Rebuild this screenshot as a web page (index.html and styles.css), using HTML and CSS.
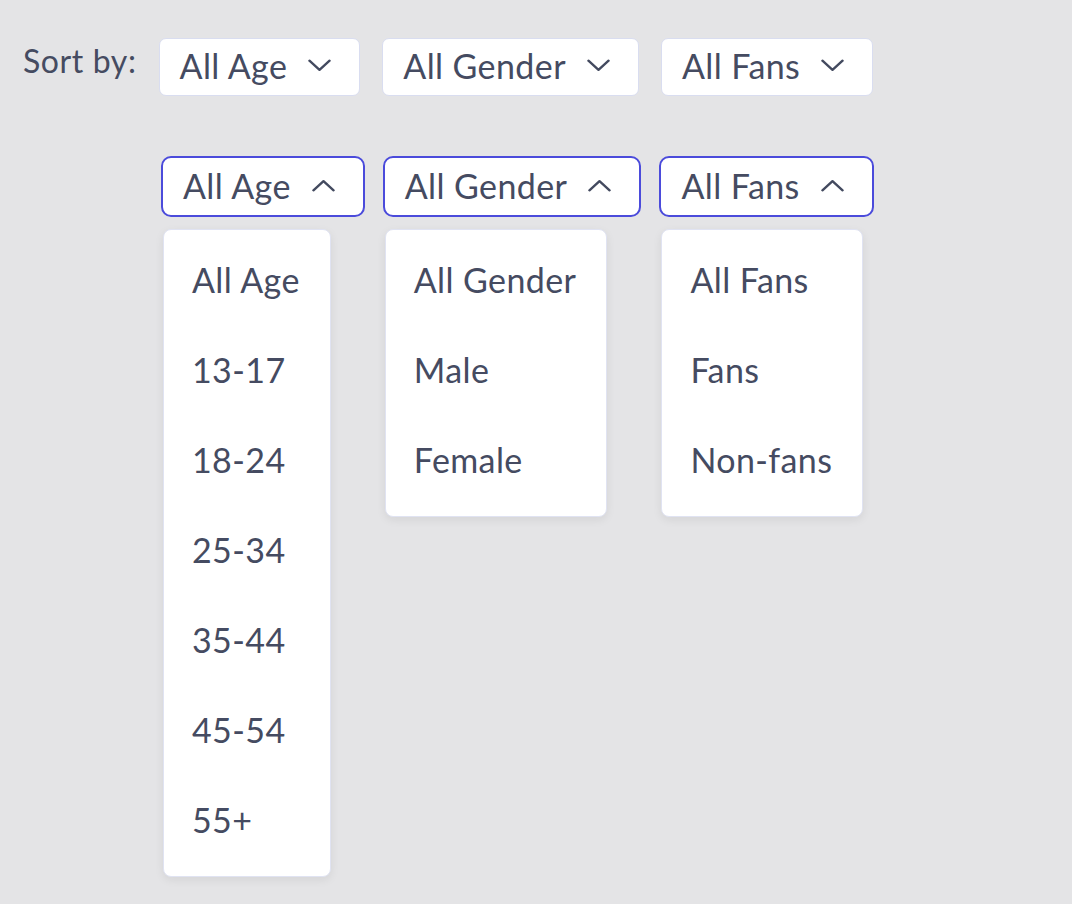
FILE: index.html
```html
<!DOCTYPE html>
<html>
<head>
<meta charset="utf-8">
<link rel="stylesheet" href="styles.css">
</head>
<body>
<div class="page">
  <div class="sort-row">
    <span class="sort-label">Sort by:</span>
    <button class="select">All Age<svg class="chev" viewBox="0 0 24 13"><path d="M1.5 1.5 L12 11 L22.5 1.5"/></svg></button>
    <button class="select">All Gender<svg class="chev" viewBox="0 0 24 13"><path d="M1.5 1.5 L12 11 L22.5 1.5"/></svg></button>
    <button class="select">All Fans<svg class="chev" viewBox="0 0 24 13"><path d="M1.5 1.5 L12 11 L22.5 1.5"/></svg></button>
  </div>

  <div class="open-row">
    <div class="dd">
      <button class="select open">All Age<svg class="chev" viewBox="0 0 24 13"><path d="M1.5 11.5 L12 2 L22.5 11.5"/></svg></button>
      <ul class="menu">
        <li>All Age</li>
        <li>13-17</li>
        <li>18-24</li>
        <li>25-34</li>
        <li>35-44</li>
        <li>45-54</li>
        <li>55+</li>
      </ul>
    </div>
    <div class="dd">
      <button class="select open">All Gender<svg class="chev" viewBox="0 0 24 13"><path d="M1.5 11.5 L12 2 L22.5 11.5"/></svg></button>
      <ul class="menu">
        <li>All Gender</li>
        <li>Male</li>
        <li>Female</li>
      </ul>
    </div>
    <div class="dd">
      <button class="select open">All Fans<svg class="chev" viewBox="0 0 24 13"><path d="M1.5 11.5 L12 2 L22.5 11.5"/></svg></button>
      <ul class="menu">
        <li>All Fans</li>
        <li>Fans</li>
        <li>Non-fans</li>
      </ul>
    </div>
  </div>
</div>
</body>
</html>
```

FILE: styles.css
```css
* { box-sizing: border-box; }
html, body {
  margin: 0;
  padding: 0;
  background: #e4e4e6;
}
body {
  font-family: "Lato", "Liberation Sans", sans-serif;
  color: #454b61;
  width: 1072px;
  height: 904px;
  overflow: hidden;
}
.page {
  padding: 38px 0 0 23px;
}
.sort-row {
  display: flex;
  align-items: flex-start;
  gap: 22px;
}
.sort-label {
  font-size: 32px;
  letter-spacing: 0.6px;
  line-height: 46px;
}
.select {
  display: flex;
  align-items: center;
  gap: 21px;
  height: 58px;
  padding: 0 28px 4px 20px;
  background: #fff;
  border: 1px solid #d9ddf0;
  border-radius: 7px;
  font-family: inherit;
  font-size: 34px;
  letter-spacing: 0.4px;
  color: #454b61;
  cursor: pointer;
}
.chev {
  width: 23px;
  height: 13px;
  fill: none;
  stroke: #434a5f;
  stroke-width: 2.5;
  stroke-linecap: round;
  stroke-linejoin: round;
}
.open-row {
  display: flex;
  align-items: flex-start;
  gap: 18px;
  margin-top: 60px;
  margin-left: 138px;
}
.dd {
  display: flex;
  flex-direction: column;
  align-items: flex-start;
}
.select.open {
  height: 61px;
  border: 2px solid #4b4bdb;
  border-radius: 10px;
  padding: 0 28px 3px 20px;
}
.menu {
  list-style: none;
  margin: 12px 0 0 2px;
  padding: 5px 30px 11px 28px;
  background: #fff;
  border: 1px solid #e0e3f2;
  border-radius: 8px;
  box-shadow: 0 3px 10px rgba(0, 0, 0, 0.07);
}
.menu li {
  height: 90px;
  line-height: 90px;
  font-size: 34px;
  letter-spacing: 0.4px;
  white-space: nowrap;
}
```
